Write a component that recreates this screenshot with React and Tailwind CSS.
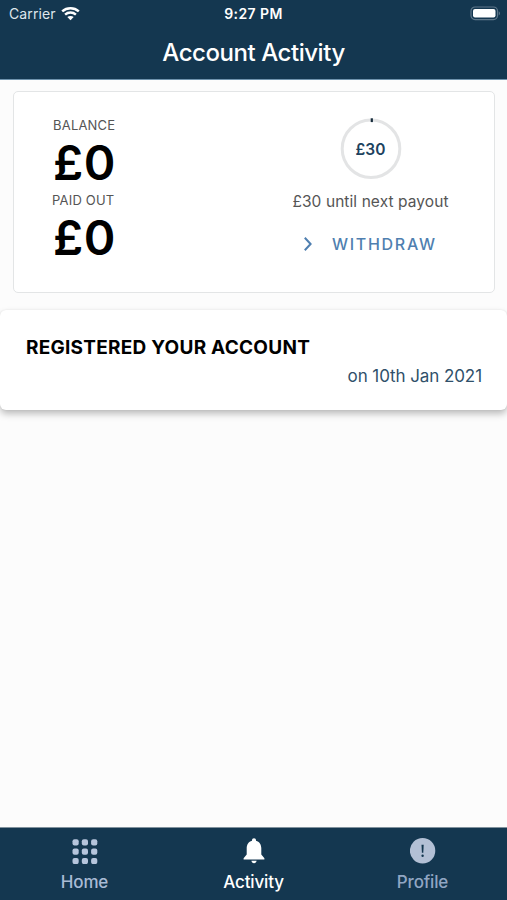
function Wifi() {
  return (
    <svg className="ml-[5px] h-[14px] w-[19px]" viewBox="0 0 19 14" fill="none" stroke="#fff" strokeWidth="2.5">
      <path d="M1.2 4.4C5.9.2 13.1.2 17.8 4.4" />
      <path d="M4.1 7.6C7.2 4.9 11.8 4.9 14.9 7.6" />
      <path d="M9.5 13.2L6.3 10C8.2 8.5 10.8 8.5 12.7 10Z" fill="#fff" stroke="none" />
    </svg>
  );
}

function Battery() {
  return (
    <svg className="h-[15px] w-[31px]" viewBox="0 0 31 15">
      <rect x="1" y="1" width="26.5" height="12.6" rx="4" fill="none" stroke="#5f778a" strokeWidth="1.2" />
      <rect x="3" y="3" width="22.5" height="8.6" rx="2" fill="#fff" />
      <path d="M28.8 5.2Q30.8 7.3 28.8 9.4Z" fill="#718697" />
    </svg>
  );
}

function Amount({ label, value, shift }) {
  return (
    <div className="h-[75px]">
      <div className={`h-[20px] text-[13px] leading-[20px] tracking-[0.2px] whitespace-nowrap text-[#555] ${shift}`}>{label}</div>
      <div className="h-[55px] pl-px text-[48px] leading-[56px] font-[580] tracking-[0.5px] text-black">{value}</div>
    </div>
  );
}

function HomeIcon() {
  const at = [0.5, 9.8, 19.1];
  return (
    <svg className="h-[26px] w-[26px]" viewBox="0 0 26 26" fill="#b6c5dc">
      {at.map((y) => at.map((x) => <rect key={`${x}-${y}`} x={x} y={y + 0.8} width="6.2" height="6.2" rx="2" />))}
    </svg>
  );
}

function BellIcon() {
  return (
    <svg className="h-[26px] w-[22px]" viewBox="0 0 22 26" fill="#fff">
      <path d="M11 .3C9.8.3 9 1.1 9 2.3V2.7C5.5 3.6 3.7 6.6 3.7 10.2V16.5L.6 20.3V21.6H21.4V20.3L18.3 16.5V10.2C18.3 6.6 16.5 3.6 13 2.7V2.3C13 1.1 12.2.3 11 .3Z" />
      <path d="M8.4 22.7H13.6C13.4 24.2 12.4 25.2 11 25.2S8.6 24.2 8.4 22.7Z" />
    </svg>
  );
}

function ProfileIcon() {
  return (
    <svg className="h-[26px] w-[26px]" viewBox="0 0 26 26">
      <circle cx="12.6" cy="12.7" r="12.7" fill="#b3c0d5" />
      <path d="M11.5 6.8H13.7L13.3 14.8H11.9Z" fill="#143750" />
      <circle cx="12.6" cy="17.7" r="1.2" fill="#143750" />
    </svg>
  );
}

function Tab({ icon, label, color }) {
  return (
    <div className={`flex w-1/3 flex-col items-center pt-[10px] ${color}`}>
      {icon}
      <div className="mt-[7px] text-[17px] leading-[22px] font-medium tracking-[-0.15px]">{label}</div>
    </div>
  );
}

export default function App() {
  return (
    <div className="flex h-[900px] w-[507px] flex-col overflow-hidden bg-[#fcfcfc] font-['Inter',sans-serif]">
      <header className="h-[80px] shrink-0 border-b border-[#6f93ad] bg-[#143750] text-white">
        <div className="grid h-[27px] grid-cols-3 items-center px-[6px]">
          <div className="flex items-center pl-[3px] text-[14px] tracking-[0.1px] text-[#dfe6ec]">
            Carrier
            <Wifi />
          </div>
          <div className="text-center text-[14px] leading-[20px] font-semibold tracking-[0.4px]">9:27 PM</div>
          <div className="flex justify-end"><Battery /></div>
        </div>
        <h1 className="h-[52px] text-center text-[24px] leading-[52px] font-medium tracking-[-0.45px]">Account Activity</h1>
      </header>

      <section className="ml-[13px] mr-[12px] mt-[11px] flex h-[202px] shrink-0 justify-between rounded-[5px] border-[1.5px] border-[#e3e5e6] bg-white pl-[38px] pr-[45px]">
        <div className="pt-[23px]">
          <Amount label="BALANCE" value="£0" shift="pl-px" />
          <Amount label="PAID OUT" value="£0" shift="pl-0" />
        </div>
        <div className="flex w-[157px] flex-col items-center pt-[26px]">
          <div className="grid h-[62px] w-[62px] place-items-center">
            <svg className="col-start-1 row-start-1 h-[62px] w-[62px]" viewBox="0 0 62 62">
              <circle cx="31" cy="30.8" r="28.8" fill="none" stroke="#e3e4e5" strokeWidth="3" />
              <path d="M31.8 .3V4.1" stroke="#162b3b" strokeWidth="2.2" />
            </svg>
            <span className="col-start-1 row-start-1 pt-px text-[15.5px] font-[570] text-[#1d425e]">£30</span>
          </div>
          <div className="mt-[11px] text-[15.5px] leading-[22px] tracking-[0.08px] whitespace-nowrap text-[#555]">£30 until next payout</div>
          <div className="mt-[19px] flex h-[24px] w-full items-center pl-[11px] text-[#4f7fb0]">
            <svg className="h-[16px] w-[10px]" viewBox="0 0 10 16" fill="none" stroke="currentColor" strokeWidth="2">
              <path d="M1.8 1.8L7.6 8L1.8 14.2" />
            </svg>
            <span className="ml-[19px] text-[16px] font-medium tracking-[1.7px]">WITHDRAW</span>
          </div>
        </div>
      </section>

      <section className="mt-[17px] h-[100px] shrink-0 rounded-[6px] bg-white pl-[26px] pr-[25px] pt-[24px] shadow-[0_4px_7px_rgba(0,0,0,0.25),0_0_2px_rgba(0,0,0,0.08)]">
        <h2 className="text-[19px] leading-[28px] font-[650] tracking-[0.25px] text-black">REGISTERED YOUR ACCOUNT</h2>
        <p className="text-right text-[17px] leading-[28px] tracking-[-0.08px] text-[#30506a]">on 10th Jan 2021</p>
      </section>

      <nav className="mt-auto flex h-[73px] shrink-0 border-t border-[#81929d] bg-[#143750]">
        <Tab icon={<HomeIcon />} label="Home" color="text-[#a9bbd5]" />
        <Tab icon={<BellIcon />} label="Activity" color="text-white" />
        <Tab icon={<ProfileIcon />} label="Profile" color="text-[#91a6c3]" />
      </nav>
    </div>
  );
}
